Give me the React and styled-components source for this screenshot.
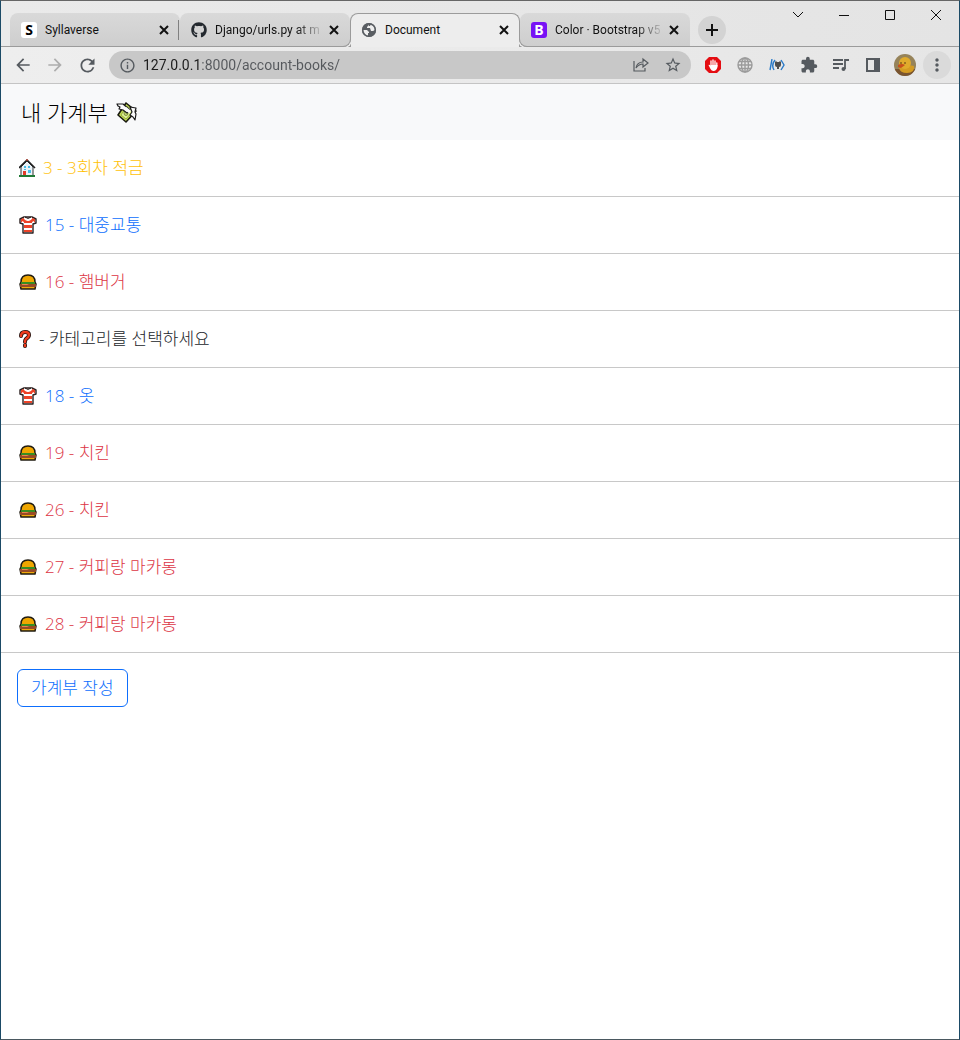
import React from 'react';
import styled, { createGlobalStyle } from 'styled-components';
import {
  MdArrowBack,
  MdArrowForward,
  MdRefresh,
  MdInfoOutline,
  MdStarBorder,
  MdExtension,
  MdMoreVert,
} from 'react-icons/md';
import { FaGithub } from 'react-icons/fa';

const GlobalStyle = createGlobalStyle`
  *, *::before, *::after { box-sizing: border-box; }
  body {
    margin: 0;
    background: #fff;
    font-family: "Open Sans", "Noto Sans CJK KR", sans-serif;
  }
  button { font: inherit; color: inherit; }
`;

const line = '#9b9b9b';
const activeFill = '#ededed';

const Window = styled.div`
  min-height: 100vh;
  display: flex;
  flex-direction: column;
  border: 1px solid #1b4a66;
  border-top-color: #666;
  border-bottom-color: #4a5860;
  background: #fff;
`;

const TabStrip = styled.header`
  display: flex;
  align-items: flex-end;
  height: 46px;
  padding-left: 9px;
  background: linear-gradient(90deg, #eaeaea, #e4e4e4);
  border-bottom: 1px solid ${line};
`;

const Tab = styled.div`
  position: relative;
  display: flex;
  align-items: center;
  flex: 0 1 170px;
  min-width: 0;
  height: ${(p) => (p.$active ? 34 : 33)}px;
  margin-bottom: ${(p) => (p.$active ? -1 : 0)}px;
  padding: 0 7px ${(p) => (p.$active ? 2 : 1)}px 10px;
  z-index: ${(p) => (p.$active ? 1 : 0)};
  border: 1px solid ${(p) => (p.$active ? line : 'transparent')};
  border-bottom: 0;
  border-radius: 8px 8px 0 0;
  background: ${(p) => (p.$active ? activeFill : 'linear-gradient(#d9d9d9, #cecece)')} border-box;

  &::before,
  &::after {
    content: '';
    display: ${(p) => (p.$active ? 'block' : 'none')};
    position: absolute;
    bottom: 0;
    width: 8px;
    height: 8px;
    border-bottom: 1px solid ${line};
  }
  &::before {
    right: 100%;
    border-right: 1px solid ${line};
    border-bottom-right-radius: 8px;
    box-shadow: 1px 1px 0 ${activeFill};
  }
  &::after {
    left: 100%;
    border-left: 1px solid ${line};
    border-bottom-left-radius: 8px;
    box-shadow: -1px 1px 0 ${activeFill};
  }
`;

const Divider = styled.span`
  position: absolute;
  right: 0;
  top: 6px;
  width: 1px;
  height: 20px;
  background: #808080;
`;

const Favicon = styled.span`
  display: flex;
  flex: none;
  width: 16px;
  height: 16px;
  align-items: center;
  justify-content: center;
  border-radius: ${(p) => (p.$square ? 3 : 0)}px;
  background: ${(p) => p.$fill || 'none'};
  color: ${(p) => p.$color || '#24292f'};
  font: 700 14px/16px "Open Sans", sans-serif;
`;

const TabTitle = styled.span`
  flex: 1;
  min-width: 0;
  margin: 0 2px 0 8px;
  overflow: hidden;
  white-space: nowrap;
  font-family: Roboto, sans-serif;
  font-size: 12px;
  line-height: 18px;
  color: #111;
  mask-image: ${(p) => (p.$fade ? 'linear-gradient(90deg, #000 calc(100% - 28px), transparent)' : 'none')};
`;

const PlainButton = styled.button`
  display: flex;
  flex: none;
  align-items: center;
  justify-content: center;
  padding: 0;
  border: 0;
  background: none;
`;

const TabClose = styled(PlainButton)`
  width: 16px;
  height: 16px;
`;

const NewTab = styled(PlainButton)`
  width: 28px;
  height: 28px;
  margin: 0 8px 2px;
  border-radius: 50%;
  background: #d3d3d3;
`;

const WindowControls = styled.div`
  display: flex;
  align-self: flex-start;
  margin-left: auto;
`;

const WindowButton = styled(PlainButton)`
  width: 46px;
  height: 28px;
`;

const Toolbar = styled.nav`
  display: flex;
  align-items: center;
  height: 37px;
  padding: 0 6px;
  background: linear-gradient(90deg, #eee, #e6e6e6);
  border-bottom: 1px solid #c4c4c4;
`;

const ToolButton = styled(PlainButton)`
  width: 32px;
  height: 28px;
  color: ${(p) => (p.$muted ? '#adadad' : '#555a5f')};
`;

const MenuDisc = styled.span`
  display: flex;
  align-items: center;
  justify-content: center;
  width: 28px;
  height: 28px;
  border-radius: 50%;
  background: #dadada;
`;

const Omnibox = styled.label`
  display: flex;
  flex: 1;
  align-items: center;
  min-width: 0;
  height: 28px;
  margin: 0 6px;
  padding: 0 2px 0 10px;
  border-radius: 14px;
  background: #c8c8c8;
  color: #555a5f;
  > svg { flex: none; }
`;

const Address = styled.input`
  flex: 1;
  min-width: 0;
  height: 24px;
  margin-left: 7px;
  padding: 0;
  border: 0;
  outline: 0;
  font: 14px/24px Roboto, sans-serif;
  color: transparent;
  background: linear-gradient(90deg, #1c1c1c 56px, #55585c 56px);
  -webkit-background-clip: text;
  background-clip: text;
`;

const Navbar = styled.header`
  display: flex;
  align-items: center;
  gap: 8px;
  height: 56px;
  padding: 0 20px;
  background: #f8f9fa;
`;

const Title = styled.h1`
  margin: 0;
  font-size: 22px;
  line-height: 30px;
  font-weight: 300;
  color: #000;
`;

const List = styled.ul`
  margin: 0;
  padding: 0;
  list-style: none;
`;

const tones = { yellow: '#ffc107', blue: '#0d6efd', red: '#dc3545', dark: '#212529' };

const Row = styled.li`
  display: flex;
  align-items: center;
  height: 57px;
  padding: 0 18px;
  border-bottom: 1px solid #c8c8c8;
`;

const RowLink = styled.a`
  display: flex;
  align-items: center;
  gap: 6px;
  font-size: 17px;
  font-weight: 300;
  line-height: 24px;
  color: ${(p) => tones[p.$tone]};
  text-decoration: none;
`;

const Actions = styled.div`
  padding: 16px;
`;

const OutlineButton = styled.button`
  height: 38px;
  padding: 0 13px;
  border: 1px solid #0d6efd;
  border-radius: 6px;
  background: none;
  font-size: 17px;
  font-weight: 300;
  line-height: 24px;
  color: #0d6efd;
`;

const CloseGlyph = () => (
  <svg width="10" height="10" viewBox="0 0 10 10" fill="none" stroke="#111" strokeWidth="2">
    <path d="M1 1l8 8M9 1L1 9" />
  </svg>
);

const Money = () => (
  <svg width="22" height="22" viewBox="0 0 22 22" role="img" aria-label="money with wings">
    <path d="M10 2l10 8-10 11-8-7z" fill="#c3dd55" stroke="#1a1a10" strokeWidth="1.6" strokeLinejoin="round" />
    <path d="M11 5l6 5-7 8-5-4z" fill="#e0ee98" stroke="#86a02e" strokeWidth="0.8" />
    <ellipse cx="10" cy="12" rx="2" ry="2.6" fill="#b9cf6a" stroke="#6f8030" strokeWidth="0.8" />
    <path d="M1 3h6l7 6-3 3-4-3-4-1 1-2-2-1z" fill="#fbfbfb" stroke="#1b1b1b" strokeWidth="1.2" strokeLinejoin="round" />
    <path d="M14 6l6 1-1 4 1 2-1 6-2-3-3-2 2-3z" fill="#fbfbfb" stroke="#1b1b1b" strokeWidth="1.2" strokeLinejoin="round" />
    <path d="M9 7l5 4" stroke="#fbfbfb" strokeWidth="3" />
  </svg>
);

const House = () => (
  <svg width="18" height="18" viewBox="0 0 18 18" role="img" aria-label="house">
    <path d="M2 8l6-6 6 6v9H2z" fill="#eaf3f8" stroke="#333" />
    <path d="M0 9l8-8 8 8" fill="none" stroke="#222" strokeWidth="1.6" />
    <path d="M7 1l1-1 1 1-1 1z" fill="#e8452e" />
    <path d="M5 7h2v2H5zM9 7h2v2H9zM5 10h2v1H5zM9 11h3v3H9z" fill="#49bde8" />
    <path d="M4 12h3v5H4z" fill="#e33b28" />
    <path d="M0 16h16v2H0z" fill="#1f7a35" />
  </svg>
);

const Shirt = () => (
  <svg width="20" height="18" viewBox="0 0 20 18" role="img" aria-label="t-shirt">
    <path d="M5 1h8l4 2v4l-3 1v9H4V8L1 7V3z" fill="#fff" stroke="#2b2020" strokeWidth="1.4" strokeLinejoin="round" />
    <path d="M2 3l3-1 4 3 4-3 3 1v3l-3 1H5L2 6zM5 9h8v3H5zM5 14h8v2H5z" fill="#ed4328" />
    <path d="M3 5l2 1v1H3zM15 5l-2 1v1h2z" fill="#fff" />
    <path d="M5 1q4 5 8 0v2q-4 4-8 0z" fill="#fff" />
    <path d="M6 1q3 3 6 0" fill="none" stroke="#2b2020" />
  </svg>
);

const Burger = () => (
  <svg width="20" height="16" viewBox="0 0 20 16" role="img" aria-label="hamburger">
    <path d="M2 8Q2 1 9 1t7 7l1 2-1 5H2l-1-5z" fill="#efa600" stroke="#211c12" strokeWidth="1.5" strokeLinejoin="round" />
    <path d="M2 8h14v2H2z" fill="#398d22" />
    <path d="M1 10h16v3H1z" fill="#984b26" />
    <path d="M3 10h7l-2 1H3z" fill="#ed8150" />
    <path d="M3 13h12v1H3z" fill="#f0aa0a" />
  </svg>
);

const Question = () => (
  <svg width="14" height="18" viewBox="0 0 14 18" role="img" aria-label="question mark" fill="none">
    <path d="M2 6q0-4 4-4t4 3q0 2-3 4-1 1-1 3M6 15v1" stroke="#24110e" strokeWidth="4" strokeLinecap="round" />
    <path d="M2 6q0-4 4-4t4 3q0 2-3 4-1 1-1 3M6 15v1" stroke="#ef3b1d" strokeWidth="2.4" strokeLinecap="round" />
  </svg>
);

const TabGlobe = () => (
  <svg width="16" height="16" viewBox="0 0 16 16">
    <circle cx="8" cy="8" r="7" fill="#5a5e63" />
    <path d="M2 8h4l2 2v1H7v3Q2 13 2 8zM7 2q1 2-1 3v1h3l1 3h2l2-1q0-4-4-6l-1 2H8z" fill="#eee" />
    <circle cx="8" cy="8" r="6.3" fill="none" stroke="#5a5e63" strokeWidth="1.6" />
  </svg>
);

const ShareIcon = () => (
  <svg width="18" height="16" viewBox="0 0 18 16" fill="none" stroke="currentColor" strokeWidth="1.2">
    <path d="M2 4v10h11v-3M4 11q1-6 7-6V2l5 4-5 4V7q-4 0-7 4z" />
  </svg>
);

const BlockIcon = () => (
  <svg width="18" height="18" viewBox="0 0 18 18">
    <path d="M5 1h8l4 4v8l-4 4H5l-4-4V5z" fill="#e40d12" />
    <path d="M7 10V5M9 9V4M11 10V5M12.8 10V7" stroke="#fff" strokeWidth="1.3" strokeLinecap="round" />
    <path d="M4.5 9q1-1 2 1V9h7v2q-1 4-4 4-2 0-3-2z" fill="#fff" />
  </svg>
);

const GridGlobe = () => (
  <svg width="16" height="16" viewBox="0 0 16 16" fill="none" stroke="#9b9b9b" strokeWidth="1.4">
    <circle cx="8" cy="8" r="7" />
    <ellipse cx="8" cy="8" rx="3.5" ry="7" />
    <path d="M8 1v14M1 8h14M2 4.5h12M2 11.5h12" />
  </svg>
);

const CodeCat = () => (
  <svg width="16" height="12" viewBox="0 0 16 12" fill="none" stroke="#2879c8" strokeWidth="1.4">
    <path d="M3 0L1 11M6 1Q2 6 5 11M12 1l3 5-3 5" />
    <path d="M6 3l1-1 1 1h2l1-1 1 1v3q0 2-2 2v2H8V8Q6 8 6 6z" fill="#4d4d4d" stroke="none" />
  </svg>
);

const MusicQueue = () => (
  <svg width="18" height="16" viewBox="0 0 18 16" fill="none" stroke="currentColor" strokeWidth="1.8">
    <path d="M1 3h10M1 7h10M1 11h6M13 12V3h4" />
    <circle cx="11.5" cy="12" r="2" fill="currentColor" stroke="none" />
  </svg>
);

const SidePanel = () => (
  <svg width="14" height="14" viewBox="0 0 14 14">
    <path d="M1 1h12v12H1z" fill="none" stroke="currentColor" strokeWidth="2" />
    <path d="M8 1h5v12H8z" fill="currentColor" />
  </svg>
);

const Duck = () => (
  <svg width="22" height="22" viewBox="0 0 22 22">
    <defs>
      <clipPath id="avatar"><circle cx="11" cy="11" r="11" /></clipPath>
    </defs>
    <g clipPath="url(#avatar)">
      <path d="M0 0h22v22H0z" fill="#96835a" />
      <path d="M0 15h22v7H0z" fill="#795430" />
      <path d="M5 14q7-4 15-2 1 7-7 7-7 0-8-5z" fill="#d49b22" />
      <circle cx="11" cy="9" r="6" fill="#e0ab2c" />
      <path d="M4 11q4-2 7 0l-4 3-3-1z" fill="#c8501c" />
      <path d="M6 9h2M10 9h2" stroke="#5a3a12" />
    </g>
  </svg>
);

const tabs = [
  { title: 'Syllaverse', icon: <Favicon $square $fill="#fff" $color="#000">S</Favicon>, divider: true },
  { title: 'Django/urls.py at m', icon: <Favicon><FaGithub size={16} /></Favicon>, fade: true },
  { title: 'Document', icon: <Favicon><TabGlobe /></Favicon>, active: true },
  { title: 'Color · Bootstrap v5', icon: <Favicon $square $fill="#7812f5" $color="#fff">B</Favicon>, fade: true },
];

const emoji = { house: <House />, shirt: <Shirt />, burger: <Burger />, question: <Question /> };

const entries = [
  { icon: 'house', tone: 'yellow', text: '3 - 3회차 적금' },
  { icon: 'shirt', tone: 'blue', text: '15 - 대중교통' },
  { icon: 'burger', tone: 'red', text: '16 - 햄버거' },
  { icon: 'question', tone: 'dark', text: '- 카테고리를 선택하세요' },
  { icon: 'shirt', tone: 'blue', text: '18 - 옷' },
  { icon: 'burger', tone: 'red', text: '19 - 치킨' },
  { icon: 'burger', tone: 'red', text: '26 - 치킨' },
  { icon: 'burger', tone: 'red', text: '27 - 커피랑 마카롱' },
  { icon: 'burger', tone: 'red', text: '28 - 커피랑 마카롱' },
];

const controls = [
  ['Search tabs', 'M1 3l5 5 5-5'],
  ['Minimize', 'M1 6.5h10'],
  ['Maximize', 'M1.5 1.5h9v9h-9z'],
  ['Close window', 'M1 1l10 10M11 1L1 11'],
];

export default function App() {
  return (
    <Window>
      <GlobalStyle />
      <TabStrip>
        {tabs.map((t) => (
          <Tab key={t.title} $active={t.active}>
            {t.icon}
            <TabTitle $fade={t.fade}>{t.title}</TabTitle>
            <TabClose aria-label={`Close ${t.title}`}><CloseGlyph /></TabClose>
            {t.divider && <Divider />}
          </Tab>
        ))}
        <NewTab aria-label="New tab">
          <svg width="12" height="12" viewBox="0 0 12 12" stroke="#111" strokeWidth="2">
            <path d="M6 0v12M0 6h12" />
          </svg>
        </NewTab>
        <WindowControls>
          {controls.map(([label, d]) => (
            <WindowButton key={label} aria-label={label}>
              <svg width="12" height="12" viewBox="0 0 12 12" fill="none" stroke="#111"><path d={d} /></svg>
            </WindowButton>
          ))}
        </WindowControls>
      </TabStrip>
      <Toolbar>
        <ToolButton aria-label="Back"><MdArrowBack size={20} /></ToolButton>
        <ToolButton aria-label="Forward" $muted><MdArrowForward size={20} /></ToolButton>
        <ToolButton aria-label="Reload"><MdRefresh size={21} /></ToolButton>
        <Omnibox>
          <MdInfoOutline size={17} />
          <Address aria-label="Address" defaultValue="127.0.0.1:8000/account-books/" />
          <ToolButton aria-label="Share"><ShareIcon /></ToolButton>
          <ToolButton aria-label="Bookmark"><MdStarBorder size={18} /></ToolButton>
        </Omnibox>
        <ToolButton aria-label="Ad blocker"><BlockIcon /></ToolButton>
        <ToolButton aria-label="Web extension"><GridGlobe /></ToolButton>
        <ToolButton aria-label="Code extension"><CodeCat /></ToolButton>
        <ToolButton aria-label="Extensions"><MdExtension size={18} /></ToolButton>
        <ToolButton aria-label="Media"><MusicQueue /></ToolButton>
        <ToolButton aria-label="Side panel"><SidePanel /></ToolButton>
        <ToolButton aria-label="Profile"><Duck /></ToolButton>
        <ToolButton aria-label="Menu"><MenuDisc><MdMoreVert size={20} /></MenuDisc></ToolButton>
      </Toolbar>
      <Navbar>
        <Title>내 가계부</Title>
        <Money />
      </Navbar>
      <main>
        <List>
          {entries.map((e) => (
            <Row key={e.text}>
              <RowLink href="#" $tone={e.tone}>{emoji[e.icon]}{e.text}</RowLink>
            </Row>
          ))}
        </List>
        <Actions>
          <OutlineButton>가계부 작성</OutlineButton>
        </Actions>
      </main>
    </Window>
  );
}
